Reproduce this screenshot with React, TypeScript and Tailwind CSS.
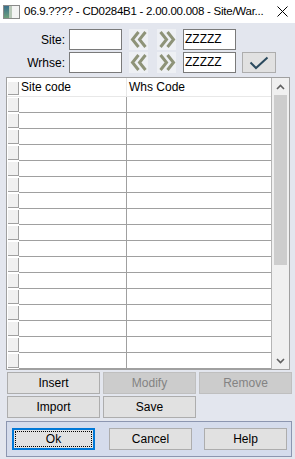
import React from 'react';

const font = { fontFamily: '"Liberation Sans", Arial, sans-serif' };

const Chevrons = ({ dir }: { dir: 'left' | 'right' }) => (
  <div className="w-[19px] h-[21px] bg-[#eef0f4] flex items-center justify-center">
    <svg width="18" height="17" viewBox="0 0 18 17">
      {dir === 'left' ? (
        <g fill="none" stroke="#8e9378" strokeWidth="3">
          <path d="M8.5 1 L2.5 8.5 L8.5 16" />
          <path d="M15.5 1 L9.5 8.5 L15.5 16" />
        </g>
      ) : (
        <g fill="none" stroke="#8e9378" strokeWidth="3">
          <path d="M2.5 1 L8.5 8.5 L2.5 16" />
          <path d="M9.5 1 L15.5 8.5 L9.5 16" />
        </g>
      )}
    </svg>
  </div>
);

const Input = ({ value = '' }: { value?: string }) => (
  <div className="w-[53px] h-[21px] bg-white border border-[#7a7a7a] text-[12px] leading-[19px] pl-[1px] text-black">
    {value}
  </div>
);

const Btn = ({ label, disabled, className = '' }: { label: string; disabled?: boolean; className?: string }) => (
  <div
    className={`h-[22px] border flex items-center justify-center text-[12px] ${
      disabled ? 'bg-[#cccccc] border-[#bfbfbf] text-[#838383]' : 'bg-[#e1e1e1] border-[#adadad] text-black'
    } ${className}`}
  >
    {label}
  </div>
);

export default function App() {
  const rows = Array.from({ length: 17 });
  return (
    <div className="w-[295px] h-[459px] bg-[#e3e6ee] overflow-hidden" style={font}>
      {/* title bar */}
      <div className="h-[23px] bg-white flex items-center">
        <div className="shrink-0 ml-[3px] w-[17px] h-[14px] border border-[#8a8a8a] bg-[#f4f4f4] flex">
          <div className="w-[5px] h-full bg-gradient-to-b from-[#3a6f8a] to-[#6fa07a]" />
          <div className="w-[3px] h-full bg-[#b8c8b8]" />
        </div>
        <div className="ml-[4px] text-[11.5px] tracking-[-0.25px] text-black whitespace-nowrap">
          06.9.???? - CD0284B1 - 2.00.00.008 - Site/War...
        </div>
        <svg className="shrink-0 ml-auto mr-[7px]" width="11" height="11" viewBox="0 0 11 11">
          <path d="M0.5 0.5 L10.5 10.5 M10.5 0.5 L0.5 10.5" stroke="#000" strokeWidth="1" />
        </svg>
      </div>

      {/* filter rows */}
      <div className="pt-[6px] flex flex-col gap-[2px]">
        <div className="flex items-center h-[21px]">
          <div className="w-[66px] text-right text-[12px] text-black pr-[1px]">Site:</div>
          <div className="ml-[3px]"><Input /></div>
          <div className="ml-[7px]"><Chevrons dir="left" /></div>
          <div className="ml-[9px]"><Chevrons dir="right" /></div>
          <div className="ml-[7px]"><Input value="ZZZZZ" /></div>
        </div>
        <div className="flex items-center h-[21px]">
          <div className="w-[66px] text-right text-[12px] text-black pr-[1px]">Wrhse:</div>
          <div className="ml-[3px]"><Input /></div>
          <div className="ml-[7px]"><Chevrons dir="left" /></div>
          <div className="ml-[9px]"><Chevrons dir="right" /></div>
          <div className="ml-[7px]"><Input value="ZZZZZ" /></div>
          <div className="ml-[6px] w-[34px] h-[21px] bg-[#e1e1e1] border border-[#adadad] flex items-center justify-center">
            <svg width="20" height="14" viewBox="0 0 20 14">
              <path d="M1.5 6.5 L7 12 L18.5 1.5" fill="none" stroke="#2b4a5e" strokeWidth="2" />
            </svg>
          </div>
        </div>
      </div>

      {/* grid */}
      <div className="mt-[4px] ml-[6px] w-[284px] h-[293px] border border-[#a0a0a0] bg-white flex">
        <div className="w-[265px] flex flex-col border-r border-[#b5b5b5]">
          <div className="h-[19px] flex items-stretch border-b border-[#e8e8e8]">
            <div className="ml-[1px] mt-[4px] mb-[1px] w-[11px] bg-[#f0f0f0] border-r border-b border-[#a0a0a0]" />
            <div className="w-[108px] pl-[2px] text-[12px] leading-[19px] text-black border-r border-[#e8e8e8]">Site code</div>
            <div className="flex-1 pl-[2px] text-[12px] leading-[19px] text-black">Whs Code</div>
          </div>
          {rows.map((_, i) => (
            <div key={i} className="h-[16px] flex items-stretch">
              <div className="ml-[1px] my-[1px] w-[11px] bg-[#f0f0f0] border-r border-b border-[#a0a0a0]" />
              <div className="w-[108px] border-r border-b border-[#a0a0a0]" />
              <div className="flex-1 border-b border-[#a0a0a0]" />
            </div>
          ))}
        </div>
        <div className="flex-1 bg-[#f0f0f0] flex flex-col">
          <div className="h-[17px] flex items-center justify-center">
            <svg width="9" height="6" viewBox="0 0 9 6">
              <path d="M1 5 L4.5 1.5 L8 5" fill="none" stroke="#606060" strokeWidth="1.6" />
            </svg>
          </div>
          <div className="mx-[2px] h-[170px] bg-[#cdcdcd]" />
          <div className="flex-1" />
          <div className="h-[17px] flex items-center justify-center">
            <svg width="9" height="6" viewBox="0 0 9 6">
              <path d="M1 1 L4.5 4.5 L8 1" fill="none" stroke="#606060" strokeWidth="1.6" />
            </svg>
          </div>
        </div>
      </div>

      {/* action buttons */}
      <div className="mt-[2px] ml-[7px] grid grid-cols-[93px_93px_93px] gap-x-[3px] gap-y-[2px]">
        <Btn label="Insert" />
        <Btn label="Modify" disabled />
        <Btn label="Remove" disabled />
        <Btn label="Import" />
        <Btn label="Save" />
      </div>

      {/* bottom panel */}
      <div className="mt-[3px] ml-[6px] w-[286px] h-[36px] bg-[#d5dcec] border border-[#8c96b0] flex items-center">
        <div className="ml-[5px] w-[83px] h-[22px] bg-[#e1e1e1] border-2 border-[#0078d7] p-[1px]">
          <div className="w-full h-full border border-dotted border-black flex items-center justify-center text-[12px] text-black">
            Ok
          </div>
        </div>
        <Btn label="Cancel" className="ml-[14px] w-[83px]" />
        <Btn label="Help" className="ml-[12px] w-[83px]" />
      </div>
    </div>
  );
}
